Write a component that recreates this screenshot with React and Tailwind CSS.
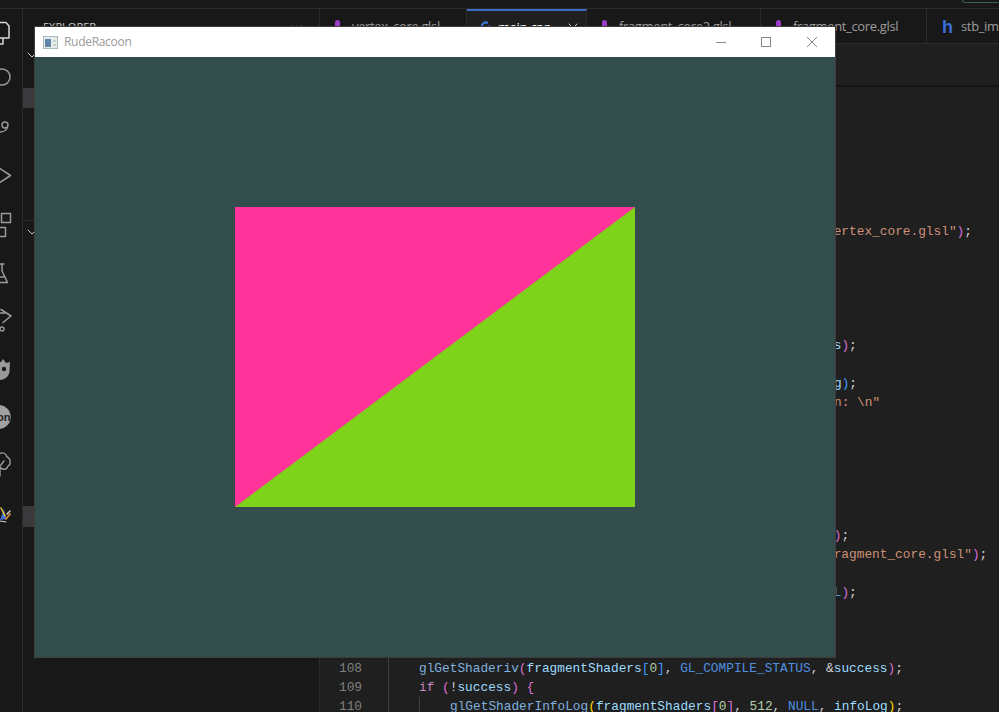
import { ChevronDown, Ellipsis, X } from 'lucide-react';

const tabs = [
  { name: 'vertex_core.glsl', width: 'w-[147px]', kind: 'glsl', gap: 'gap-[12px] pl-[15px]' },
  { name: 'main.cpp', width: 'w-[120px]', kind: 'cpp', gap: 'gap-[6px] pl-[13px]', active: true },
  { name: 'fragment_core2.glsl', width: 'w-[174px]', kind: 'glsl', gap: 'gap-[12px] pl-[15px]' },
  { name: 'fragment_core.glsl', width: 'w-[166px]', kind: 'glsl', gap: 'gap-[12px] pl-[15px]' },
  { name: 'stb_image.h', width: 'w-[150px]', kind: 'h', gap: 'gap-[8px] pl-[15px]' }
];

const tone = {
  text: 'text-[#d4d4d4]',
  fn: 'text-[#7fb0df]',
  name: 'text-[#9cdcfe]',
  constant: 'text-[#4f8fe0]',
  str: 'text-[#ce9178]',
  num: 'text-[#b5cea8]',
  key: 'text-[#c586c0]',
  pink: 'text-[#da70d6]',
  blue: 'text-[#3b9cff]',
  gold: 'text-[#ffd700]'
};

// line number, indent level, then [tone, text] pairs. Most of this sits behind the window.
const code = [
  [78, 0, []],
  [79, 0, [['text', 'int success;']]],
  [80, 0, [['text', 'char infoLog[512];']]],
  [81, 0, []],
  [82, 0, [['text', 'unsigned int vertexShader;']]],
  [83, 0, [['text', 'vertexShader = glCreateShader(GL_VERTEX_SHADER);']]],
  [84, 0, []],
  [85, 0, [['text', 'std::string vertShaderSource = loadShaderSrc("assets/'], ['str', 'vertex_core.glsl"'], ['pink', ')'], ['text', ';']]],
  [86, 0, [['text', 'const GLchar* vertShader = vertShaderSource.c_str();']]],
  [87, 0, [['text', 'glShaderSource(vertexShader, 1, &vertShader, NULL);']]],
  [88, 0, [['text', 'glCompileShader(vertexShader);']]],
  [89, 0, []],
  [90, 0, [['text', '// catch error']]],
  [91, 0, [['text', 'glGetShaderiv(vertexShader, GL_COMPILE_STATUS, &succes'], ['name', 's'], ['pink', ')'], ['text', ';']]],
  [92, 0, [['text', 'if (!success) {']]],
  [93, 1, [['text', 'glGetShaderInfoLog(vertexShader, 512, NULL, infoLo'], ['name', 'g'], ['blue', ')'], ['text', ';']]],
  [94, 1, [['text', 'std::cout << "Errors with vertex shader compilatio'], ['str', 'n: \\n"']]],
  [95, 2, [['text', '<< infoLog << std::endl;']]],
  [96, 0, [['text', '}']]],
  [97, 0, []],
  [98, 0, [['text', '// fragment shaders']]],
  [99, 0, [['text', 'unsigned int fragmentShaders[2];']]],
  [100, 0, []],
  [101, 0, [['text', 'fragmentShaders[0] = glCreateShader(GL_FRAGMENT_SHADER'], ['pink', ')'], ['text', ';']]],
  [102, 0, [['text', 'std::string fragShaderSource = loadShaderSrc("assets/f'], ['str', 'ragment_core.glsl"'], ['pink', ')'], ['text', ';']]],
  [103, 0, [['text', 'const GLchar* fragShader = fragShaderSource.c_str();']]],
  [104, 0, [['text', 'glShaderSource(fragmentShaders[0], 1, &fragShader, NUL'], ['constant', 'L'], ['pink', ')'], ['text', ';']]],
  [105, 0, [['text', 'glCompileShader(fragmentShaders[0]);']]],
  [106, 0, []],
  [107, 0, [['text', '// catch error']]],
  [108, 0, [['fn', 'glGetShaderiv'], ['pink', '('], ['name', 'fragmentShaders'], ['blue', '['], ['num', '0'], ['blue', ']'], ['text', ', '], ['constant', 'GL_COMPILE_STATUS'], ['text', ', &'], ['name', 'success'], ['pink', ')'], ['text', ';']]],
  [109, 0, [['key', 'if'], ['text', ' '], ['pink', '('], ['text', '!'], ['name', 'success'], ['pink', ')'], ['text', ' '], ['pink', '{']]],
  [110, 1, [['fn', 'glGetShaderInfoLog'], ['gold', '('], ['name', 'fragmentShaders'], ['pink', '['], ['num', '0'], ['pink', ']'], ['text', ', '], ['num', '512'], ['text', ', '], ['constant', 'NULL'], ['text', ', '], ['name', 'infoLog'], ['gold', ')'], ['text', ';']]]
];

function ActivityIcon({ children }) {
  return (
    <svg width="22" height="48" viewBox="0 0 22 48" fill="none" strokeLinecap="round" strokeLinejoin="round" className="shrink-0">
      {children}
    </svg>
  );
}

function ActivityBar() {
  return (
    <div className="flex w-[22px] shrink-0 flex-col overflow-hidden">
      <ActivityIcon>
        <path d="M-2 13.5H6L9 17V29H-2M3 29V35H-2" stroke="#d7d7d7" strokeWidth="1.5" />
      </ActivityIcon>
      <ActivityIcon>
        <circle cx="2" cy="20" r="8" stroke="#9a9a9a" strokeWidth="1.5" />
      </ActivityIcon>
      <ActivityIcon>
        <circle cx="5" cy="20" r="3" stroke="#9a9a9a" strokeWidth="1.4" />
        <path d="M7.5 22C7 25 4 27 -1 27" stroke="#9a9a9a" strokeWidth="1.4" />
      </ActivityIcon>
      <ActivityIcon>
        <path d="M-1 15L10.5 22.5L-1 30" stroke="#9a9a9a" strokeWidth="1.5" />
      </ActivityIcon>
      <ActivityIcon>
        <rect x="1.5" y="12.5" width="9" height="9" stroke="#9a9a9a" strokeWidth="1.5" />
        <path d="M-4 26.5H5.5V35.5H-4" stroke="#9a9a9a" strokeWidth="1.5" />
      </ActivityIcon>
      <ActivityIcon>
        <path d="M-2 15H4M2 15V22L7.5 33.5H-6M-1 28H5" stroke="#9a9a9a" strokeWidth="1.5" />
      </ActivityIcon>
      <ActivityIcon>
        <path d="M1 12.5L11 19L3 25.5M-2 16H5" stroke="#9a9a9a" strokeWidth="1.5" />
        <circle cx="2" cy="32" r="2" stroke="#9a9a9a" strokeWidth="1.4" />
      </ActivityIcon>
      <ActivityIcon>
        <path d="M-4 18L1 17L3 14L6 18L10 17L9.5 27C8 33 4 35 -2 35H-6V18Z" fill="#9a9a9a" />
        <circle cx="4" cy="24" r="2.2" fill="#1a1a1a" />
        <circle cx="-3" cy="24" r="2.2" fill="#1a1a1a" />
      </ActivityIcon>
      <ActivityIcon>
        <circle cx="-1.3" cy="24" r="12" fill="#a0a0a0" />
        <text x="10.5" y="28" textAnchor="end" fontFamily="Liberation Sans, sans-serif" fontSize="11" fontWeight="700" fill="#1e1e1e">on</text>
      </ActivityIcon>
      <ActivityIcon>
        <path d="M-2 14C2 10 6 12 7 16C11 17 11 24 8 25C7 29 3 29 1 27C0 28 -1 28 -2 28M4 20L0 25V35M0 35H-3" stroke="#a0a0a0" strokeWidth="1.3" />
      </ActivityIcon>
      <ActivityIcon>
        <path d="M0 31L4 20L6 30Z" fill="#3f6fd8" />
        <path d="M1 19L5 27" stroke="#e8c33a" strokeWidth="1.6" />
        <path d="M6 30L10 25" stroke="#d98b45" strokeWidth="1.8" />
        <path d="M7 25L10 22" stroke="#d8d8d8" strokeWidth="1.4" />
        <path d="M0 32L6 33" stroke="#d8d8d8" strokeWidth="1" />
      </ActivityIcon>
    </div>
  );
}

function Sidebar() {
  return (
    <div className="flex w-[298px] shrink-0 flex-col border-x border-[#2b2b2b] bg-[#181818] text-[#cccccc]">
      <div className="flex h-[35px] shrink-0 items-center justify-between pl-[20px] pr-[14px] pt-[1px] font-['Open_Sans',sans-serif] text-[11px]">
        <span>EXPLORER</span>
        <Ellipsis size={16} />
      </div>
      <div className="h-[176px] shrink-0">
        <div className="flex h-[22px] items-center pl-[1px]">
          <ChevronDown size={16} strokeWidth={1.5} />
        </div>
        <div className="mt-[22px] h-[20px] bg-[#3a3a3d]" />
      </div>
      <div className="flex-1 border-t border-[#2b2b2b]">
        <div className="flex h-[22px] items-center pl-[1px]">
          <ChevronDown size={16} strokeWidth={1.5} />
        </div>
        <div className="mt-[263px] h-[21px] bg-[#3a3a3d]" />
      </div>
    </div>
  );
}

function TabIcon({ kind }) {
  if (kind === 'glsl') return <span className="mb-[4px] h-[10px] w-[5px] shrink-0 rounded-full bg-[#9a3cc8]" />;
  if (kind === 'h') return <span className="font-['Liberation_Sans',sans-serif] text-[18px] leading-none font-bold text-[#3a6fd8]">h</span>;
  return (
    <svg width="12" height="12" viewBox="0 0 12 12" fill="none" className="mb-[2px] shrink-0">
      <path d="M8 2A4.5 4.5 0 1 0 8 10" stroke="#3a78d8" strokeWidth="2.2" />
      <path d="M9 4V8M7 6H11" stroke="#3a78d8" strokeWidth="1" />
    </svg>
  );
}

function TabStrip() {
  return (
    <div className="flex h-[35px] shrink-0 overflow-hidden border-b border-[#2b2b2b] bg-[#181818] font-['Open_Sans',sans-serif] text-[13px]">
      {tabs.map((tab) => (
        <div
          key={tab.name}
          className={`flex shrink-0 items-center whitespace-nowrap border-r border-[#2b2b2b] pt-[1px] ${tab.width} ${tab.gap} ${
            tab.active ? 'border-t-2 border-t-[#3a6cc4] bg-[#1f1f1f] text-white' : 'text-[#9d9d9d]'
          }`}
        >
          <TabIcon kind={tab.kind} />
          <span className="tracking-[-0.35px]">{tab.name}</span>
          {tab.active && <X size={16} strokeWidth={1.5} className="ml-auto mr-[5px] shrink-0 text-[#d4d4d4]" />}
        </div>
      ))}
    </div>
  );
}

function CodeLine({ number, indent, parts }) {
  return (
    <div className="flex h-[19px] leading-[19px]">
      <span className="w-[42px] shrink-0 text-right text-[#808080]">{number}</span>
      <div className="ml-[26px] flex flex-1 border-l border-[#404040] pl-[30px] whitespace-pre">
        <div className={indent > 0 ? 'flex-1 border-l border-[#404040] pl-[30px]' : 'flex-1'}>
          {parts.map(([kind, text], i) => (
            <span key={i} className={tone[kind]}>{text}</span>
          ))}
        </div>
      </div>
    </div>
  );
}

function GameWindow() {
  return (
    <div className="absolute left-[35px] top-[27px] w-[800px] shadow-[0_0_0_1px_#3d3d3d]">
      <div className="flex h-[30px] items-center justify-between bg-white">
        <div className="flex items-center gap-[6px] pl-[8px]">
          <svg width="15" height="13" viewBox="0 0 15 13">
            <rect x="0.5" y="0.5" width="14" height="12" fill="#e6ecec" stroke="#a9bcbc" />
            <rect x="2" y="3" width="6" height="8" fill="#5f86a8" />
            <rect x="10" y="4" width="3" height="2" fill="#c4d0d0" />
            <rect x="10" y="8" width="3" height="2" fill="#c4d0d0" />
          </svg>
          <span className="font-['Open_Sans',sans-serif] text-[12px] tracking-[-0.3px] text-[#9a9a9a]">RudeRacoon</span>
        </div>
        <div className="flex items-center pr-[17px] text-[#8a8a8a]">
          <svg width="12" height="12" viewBox="0 0 12 12" fill="none" stroke="currentColor" className="mr-[33px]">
            <path d="M1 6.5H11" />
          </svg>
          <svg width="12" height="12" viewBox="0 0 12 12" fill="none" stroke="currentColor" className="mr-[34px]">
            <rect x="1.5" y="1.5" width="9" height="9" />
          </svg>
          <svg width="12" height="12" viewBox="0 0 12 12" fill="none" stroke="currentColor">
            <path d="M1 1L11 11M11 1L1 11" />
          </svg>
        </div>
      </div>
      <div className="flex h-[600px] items-center justify-center bg-[#334c4c]">
        <svg width="400" height="300" viewBox="0 0 400 300">
          <rect width="400" height="300" fill="#7fd21a" />
          <path d="M0 0H400L0 300Z" fill="#ff3399" />
        </svg>
      </div>
    </div>
  );
}

export default function App() {
  return (
    <div className="relative flex h-[712px] w-[999px] flex-col overflow-hidden bg-[#181818]">
      <div className="flex h-[9px] shrink-0 justify-end border-b border-[#2b2b2b]">
        <div className="h-[3px] w-[37px] rounded-bl-[3px] border-b border-l border-[#3a5f5f]" />
      </div>
      <div className="flex min-h-0 flex-1">
        <ActivityBar />
        <Sidebar />
        <div className="flex min-w-0 flex-1 flex-col bg-[#1f1f1f]">
          <TabStrip />
          <div className="h-[43px] shrink-0 border-b-2 border-[#141414]" />
          <div className="pt-[2px] font-['Liberation_Mono',monospace] text-[12.8px]">
            {code.map(([number, indent, parts]) => (
              <CodeLine key={number} number={number} indent={indent} parts={parts} />
            ))}
          </div>
        </div>
      </div>
      <GameWindow />
    </div>
  );
}
